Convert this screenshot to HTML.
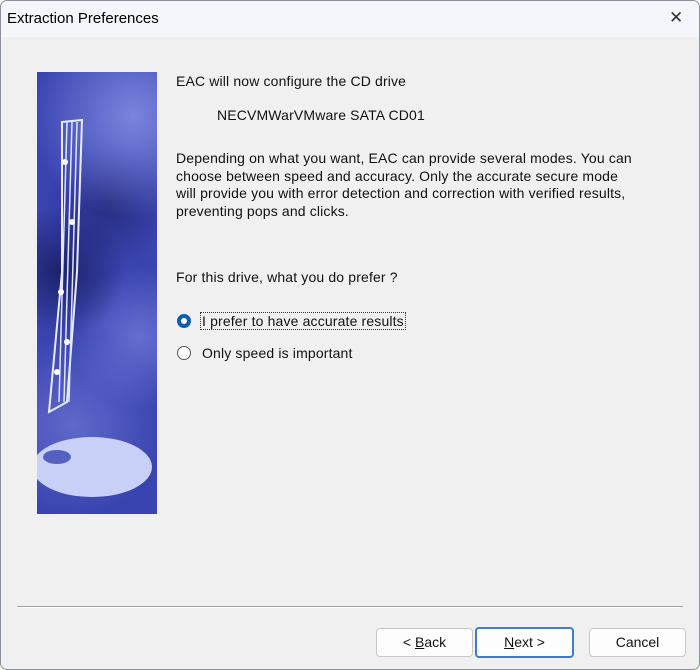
<!DOCTYPE html>
<html><head><style>
body{margin:0;width:700px;height:670px;background:#fff;overflow:hidden;font-family:"Liberation Sans",sans-serif;}
.win{position:absolute;left:0;top:0;width:698px;height:668px;border:1px solid #8a8f99;border-radius:7px;background:#f0f0f0;overflow:hidden;}
.title{position:absolute;left:0;top:0;width:698px;height:36px;background:#f3f6fa;}
.title span{position:absolute;left:6px;top:9px;font-size:15px;color:#000;}
.x{position:absolute;left:668px;top:7px;font-size:17px;color:#333;font-weight:300;}
.img{position:absolute;left:36px;top:71px;width:120px;height:442px;overflow:hidden;
background:
radial-gradient(circle at 80% 10%,rgba(150,160,240,.7),transparent 25%),
radial-gradient(circle at 20% 45%,rgba(20,25,90,.8),transparent 25%),
radial-gradient(circle at 85% 60%,rgba(130,140,230,.6),transparent 25%),
radial-gradient(circle at 60% 30%,rgba(30,35,110,.7),transparent 20%),
radial-gradient(circle at 30% 80%,rgba(120,130,220,.6),transparent 25%),
#3a44b0;}
.t{position:absolute;font-size:14px;color:#111;white-space:nowrap;letter-spacing:0.15px;}
.btn{position:absolute;top:627px;height:27px;width:95px;border:1px solid #c8c8c8;border-radius:4px;background:#fdfdfd;font-size:14px;text-align:center;line-height:27px;color:#111;}
.radio{position:absolute;width:14px;height:14px;border-radius:50%;box-sizing:border-box;}
</style></head><body>
<div class="win">
<div class="title"><span>Extraction Preferences</span><div class="x">✕</div></div>
<div class="img">
<svg width="120" height="442">
<path d="M25 50 L45 48 L40 200 L30 330 L12 340 L25 200Z" fill="none" stroke="#e8ecff" stroke-width="2"/>
<g stroke="#dfe4ff" stroke-width="1.5">
<line x1="30" y1="50" x2="22" y2="330"/><line x1="35" y1="50" x2="27" y2="330"/><line x1="40" y1="50" x2="32" y2="330"/>
</g>
<g fill="#fff"><circle cx="28" cy="90" r="3"/><circle cx="35" cy="150" r="3"/><circle cx="24" cy="220" r="3"/><circle cx="30" cy="270" r="3"/><circle cx="20" cy="300" r="3"/></g>
<ellipse cx="55" cy="395" rx="60" ry="30" fill="#c9d0f7"/>
<ellipse cx="20" cy="385" rx="14" ry="7" fill="#5560c0"/>
</svg>
</div>
<div class="t" style="left:175px;top:72px">EAC will now configure the CD drive</div>
<div class="t" style="left:216px;top:106px">NECVMWarVMware SATA CD01</div>
<div class="t" style="left:175px;top:149px;line-height:17.5px">Depending on what you want, EAC can provide several modes. You can<br>choose between speed and accuracy. Only the accurate secure mode<br>will provide you with error detection and correction with verified results,<br>preventing pops and clicks.</div>
<div class="t" style="left:175px;top:268px">For this drive, what you do prefer ?</div>
<div class="radio" style="left:176px;top:313px;border:4px solid #0a5fb4;background:#fff"></div>
<div class="t" style="left:199px;top:311px;border:1px dotted #333;padding:0 1px">I prefer to have accurate results</div>
<div class="radio" style="left:176px;top:345px;border:1px solid #555;background:#fff"></div>
<div class="t" style="left:201px;top:344px">Only speed is important</div>
<div style="position:absolute;left:16px;top:605px;width:666px;height:1px;background:#a0a0a0;border-bottom:1px solid #fff"></div>
<div class="btn" style="left:375px">&lt; <u>B</u>ack</div>
<div class="btn" style="left:474px;border:2px solid #3c7fc8;top:626px;height:27px"><u>N</u>ext &gt;</div>
<div class="btn" style="left:588px">Cancel</div>
</div>
</body></html>
